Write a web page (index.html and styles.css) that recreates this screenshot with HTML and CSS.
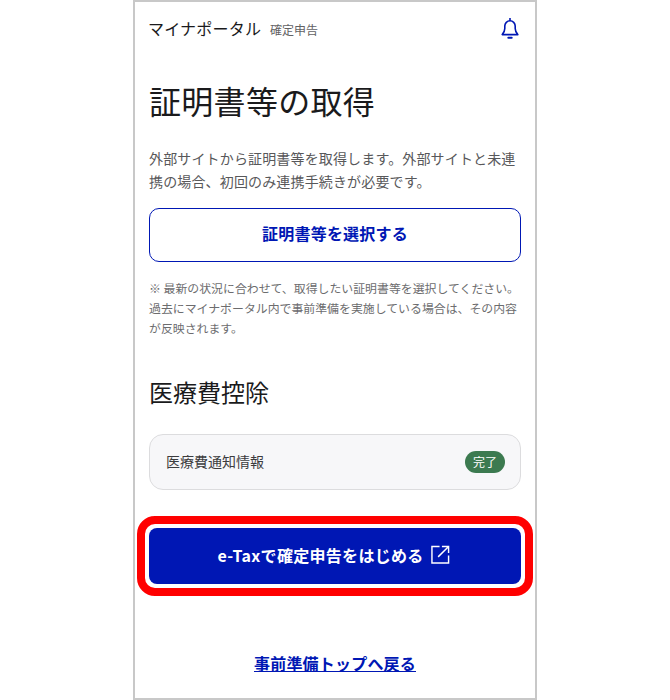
FILE: index.html
```html
<!DOCTYPE html>
<html lang="ja">
<head>
    <meta charset="UTF-8">
    <title>証明書等の取得</title>
    <link rel="stylesheet" href="styles.css">
</head>
<body>
    <div class="phone">
        <header class="header">
            <div class="brand">
                <span class="brand-name">マイナポータル</span>
                <span class="brand-sub">確定申告</span>
            </div>
            <svg class="bell" width="24" height="24" viewBox="0 0 24 24" fill="none" stroke="#0017b4" stroke-width="1.6">
                <path d="M4.200 18.600c1.600-1.700 2.600-3.500 2.600-6V10a5.200 5.200 0 0 1 10.400 0v2.600c0 2.500 1 4.300 2.600 6z" stroke-linejoin="round"/>
                <path d="M12 2v2.800"/>
                <path d="M10.300 21.800h3.400" stroke-width="2" stroke-linecap="round"/>
            </svg>
        </header>

        <h1 class="title">証明書等の取得</h1>
        <p class="lead">外部サイトから証明書等を取得します。外部サイトと未連携の場合、初回のみ連携手続きが必要です。</p>

        <a class="btn-outline">証明書等を選択する</a>
        <p class="note">※ 最新の状況に合わせて、取得したい証明書等を選択してください。過去にマイナポータル内で事前準備を実施している場合は、その内容が反映されます。</p>

        <h2 class="subtitle">医療費控除</h2>
        <div class="status-card">
            <span class="status-name">医療費通知情報</span>
            <span class="badge">完了</span>
        </div>

        <a class="btn-primary">
            e-Taxで確定申告をはじめる
            <svg width="19" height="19" viewBox="0 0 20 20" fill="none" stroke="#fff" stroke-width="1.500">
                <path d="M9 1.500H1v17.500h17.500V11"/>
                <path d="M7.500 12.500L18 2M11.500 1.500h7v7"/>
            </svg>
        </a>

        <a class="back-link">事前準備トップへ戻る</a>
    </div>
</body>
</html>
```

FILE: styles.css
```css
* {
    box-sizing: border-box;
}
body {
    margin: 0;
    height: 700px;
    overflow: hidden;
    background: #fff;
    font-family: "Noto Sans CJK JP", "Noto Sans", sans-serif;
    color: #1a1a1c;
}
.phone {
    width: 404px;
    height: 700px;
    margin-left: 133px;
    padding: 0 14px;
    border: 2px solid #c8c8c8;
    display: flex;
    flex-direction: column;
}
.header {
    display: flex;
    align-items: center;
    justify-content: space-between;
    height: 24px;
    margin-top: 14px;
}
.brand {
    display: flex;
    align-items: baseline;
    gap: 9px;
}
.brand-name {
    font-size: 16px;
    letter-spacing: 0.2px;
    margin-left: -1px;
}
.brand-sub {
    font-size: 12px;
    color: #626264;
}
.bell {
    margin-right: -1px;
}
.title {
    margin: 36px 0 0;
    font-size: 32px;
    line-height: 48px;
    font-weight: 400;
    letter-spacing: 0.3px;
}
.lead {
    margin: 23px 0 0;
    font-size: 14px;
    line-height: 23px;
    letter-spacing: 0.15px;
    color: #58585a;
}
.btn-outline {
    display: flex;
    align-items: center;
    justify-content: center;
    height: 54px;
    margin-top: 15px;
    padding-bottom: 5px;
    border: 1px solid #0017b4;
    border-radius: 10px;
    font-size: 16px;
    font-weight: 700;
    letter-spacing: 0.2px;
    color: #0017b4;
}
.note {
    margin: 16px 0 0;
    font-size: 11.900px;
    line-height: 20px;
    color: #6c6c6e;
}
.subtitle {
    margin: 35.500px 0 0;
    font-size: 24px;
    line-height: 36px;
    font-weight: 400;
}
.status-card {
    display: flex;
    align-items: center;
    justify-content: space-between;
    height: 56px;
    margin-top: 24px;
    padding: 0 15px 0 16px;
    background: #f7f7f9;
    border: 1px solid #dcdcde;
    border-radius: 14px;
}
.status-name {
    font-size: 14px;
    color: #3c3c3e;
    margin-bottom: 2px;
}
.badge {
    display: block;
    width: 40px;
    height: 22px;
    border-radius: 11px;
    background: #3c7a50;
    color: #fff;
    font-size: 12px;
    line-height: 21px;
    text-align: center;
}
.btn-primary {
    position: relative;
    display: flex;
    align-items: center;
    justify-content: center;
    gap: 7px;
    height: 56px;
    margin-top: 38px;
    padding: 0 3px 2px 0;
    background: #0017b4;
    border-radius: 8px;
    color: #fff;
    font-size: 16px;
    font-weight: 700;
    letter-spacing: 0.3px;
}
/* red annotation frame round the button */
.btn-primary::after {
    content: "";
    position: absolute;
    inset: -12px;
    border: 8px solid #f00;
    border-radius: 18px;
}
.back-link {
    margin-top: 67px;
    font-size: 16px;
    font-weight: 700;
    line-height: 24px;
    letter-spacing: 0.2px;
    text-align: center;
    color: #0017b4;
    text-decoration: underline;
}
```
